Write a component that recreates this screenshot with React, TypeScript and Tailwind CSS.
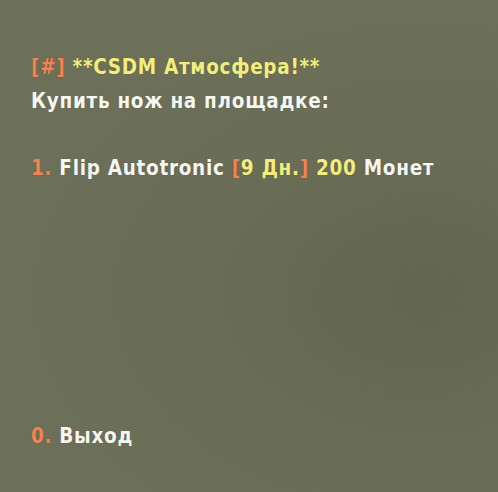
import React from "react";

const O = "text-[#f4834f]";
const Y = "text-[#f3ee7c]";
const W = "text-[#f6f6f2]";

export default function App() {
  return (
    <div className="w-[498px] h-[492px] overflow-hidden bg-[#6c6f57] bg-[radial-gradient(ellipse_at_85%_60%,#626550_0%,#6a6d55_35%,#6d7058_70%)]">
      <div
        className="flex flex-col pt-[51px] pl-[31px] text-[20.5px] font-bold leading-[33.5px] tracking-[0.7px] whitespace-pre [text-shadow:0_0_1px_rgba(0,0,0,0.25)]"
        style={{ fontFamily: '"DejaVu Sans Condensed", "DejaVu Sans", sans-serif', fontStretch: "semi-condensed" }}
      >
        <div>
          <span className={O}>[#]</span>
          <span className={Y}> **CSDM Атмосфера!**</span>
        </div>
        <div className={W}>Купить нож на площадке:</div>
        <div className="h-[33.5px]" />
        <div>
          <span className={O}>1. </span>
          <span className={W}>Flip Autotronic </span>
          <span className={O}>[</span>
          <span className={Y}>9 Дн.</span>
          <span className={O}>]</span>
          <span className={Y}> 200</span>
          <span className={W}> Монет</span>
        </div>
        <div className="h-[235px]" />
        <div>
          <span className={O}>0. </span>
          <span className={W}>Выход</span>
        </div>
      </div>
    </div>
  );
}
